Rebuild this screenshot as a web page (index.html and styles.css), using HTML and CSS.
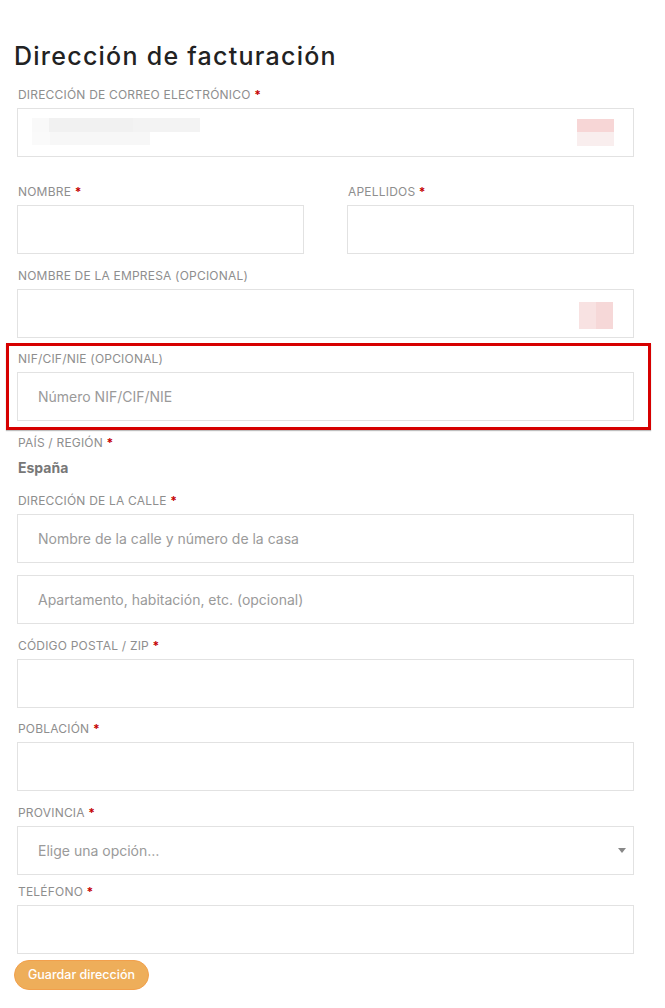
FILE: index.html
```html
<!DOCTYPE html>
<html lang="es">

<head>
    <meta charset="UTF-8">
    <meta name="viewport" content="width=device-width, initial-scale=1.0">
    <title>Dirección de facturación</title>
    <link rel="stylesheet" href="styles.css">
</head>

<body>
    <div class="billing">
        <h3 class="title">Dirección de facturación</h3>

        <div class="field field-email">
            <label class="lbl">Dirección de correo electrónico <abbr class="req">*</abbr></label>
            <div class="box">
                <div class="blur-text">
                    <span class="bt1"></span>
                    <span class="bt2"></span>
                </div>
                <div class="blur-icon"></div>
            </div>
        </div>

        <div class="row">
            <div class="field">
                <label class="lbl">Nombre <abbr class="req">*</abbr></label>
                <div class="box"></div>
            </div>
            <div class="field">
                <label class="lbl">Apellidos <abbr class="req">*</abbr></label>
                <div class="box"></div>
            </div>
        </div>

        <div class="field">
            <label class="lbl">Nombre de la empresa (opcional)</label>
            <div class="box">
                <div class="blur-icon small"></div>
            </div>
        </div>

        <div class="field marked">
            <label class="lbl">NIF/CIF/NIE (opcional)</label>
            <div class="box"><span class="ph">Número NIF/CIF/NIE</span></div>
            <div class="mark"></div>
        </div>

        <div class="field">
            <label class="lbl">País / Región <abbr class="req">*</abbr></label>
            <strong class="country">España</strong>
        </div>

        <div class="field">
            <label class="lbl">Dirección de la calle <abbr class="req">*</abbr></label>
            <div class="box"><span class="ph">Nombre de la calle y número de la casa</span></div>
            <div class="box second"><span class="ph">Apartamento, habitación, etc. (opcional)</span></div>
        </div>

        <div class="field">
            <label class="lbl">Código postal / ZIP <abbr class="req">*</abbr></label>
            <div class="box"></div>
        </div>

        <div class="field">
            <label class="lbl">Población <abbr class="req">*</abbr></label>
            <div class="box"></div>
        </div>

        <div class="field field-tight">
            <label class="lbl">Provincia <abbr class="req">*</abbr></label>
            <div class="box select">
                <span class="ph">Elige una opción…</span>
                <span class="arrow"></span>
            </div>
        </div>

        <div class="field field-last">
            <label class="lbl">Teléfono <abbr class="req">*</abbr></label>
            <div class="box"></div>
        </div>

        <button class="save">Guardar dirección</button>
    </div>
</body>

</html>
```

FILE: styles.css
```css
* {
    margin: 0;
    padding: 0;
    box-sizing: border-box;
}

body {
    background: #ffffff;
    font-family: 'Inter', 'Open Sans', sans-serif;
    color: #333333;
}

.billing {
    width: 651px;
    padding: 41px 17px 0 17px;
}

.title {
    font-size: 25px;
    font-weight: 500;
    letter-spacing: 1.25px;
    line-height: 30px;
    color: #222222;
    margin-left: -3px;
    margin-bottom: 13px;
}

.field {
    position: relative;
    margin-bottom: 10.5px;
}

.field-email {
    margin-bottom: 24px;
}

.field-tight {
    margin-bottom: 6px;
}

.field-last {
    margin-bottom: 6px;
}

.lbl {
    display: block;
    font-size: 12px;
    font-weight: 400;
    letter-spacing: 0.2px;
    line-height: 18px;
    padding-top: 2px;
    margin-bottom: 4px;
    color: #8e8e8e;
    text-transform: uppercase;
    padding-left: 1px;
}

.req {
    color: #c40000;
    font-weight: 700;
    text-decoration: none;
}

.box {
    position: relative;
    height: 49px;
    border: 1px solid #e2e2e2;
    background: #ffffff;
    display: flex;
    align-items: center;
    padding-left: 20px;
}

.box.second {
    margin-top: 12px;
}

.ph {
    font-size: 14px;
    color: #9a9a9a;
}

.row {
    display: grid;
    grid-template-columns: 287px 287px;
    column-gap: 43px;
}

.country {
    display: block;
    font-size: 14px;
    line-height: 24px;
    font-weight: 700;
    color: #777777;
    padding-left: 1px;
}

/* redacted autofill bits */
.blur-text {
    position: absolute;
    left: 14px;
    top: 9px;
    width: 168px;
    height: 28px;
}

.blur-text span {
    position: absolute;
    display: block;
}

.bt1 {
    left: 0;
    top: 0;
    width: 168px;
    height: 14px;
    background: linear-gradient(90deg, #f9f9f9 0 10%, #f1f1f1 10% 60%, #f3f3f3 60% 100%);
}

.bt2 {
    left: 0;
    top: 14px;
    width: 118px;
    height: 13px;
    background: linear-gradient(90deg, #fafafa 0 15%, #f7f7f7 15% 100%);
}

.blur-icon {
    position: absolute;
    right: 19px;
    top: 10px;
    width: 37px;
    height: 27px;
    background: linear-gradient(180deg, #f7d6d6 0 50%, #f9eeee 50% 100%);
}

.blur-icon.small {
    right: 20px;
    top: 12px;
    width: 34px;
    background: linear-gradient(90deg, #f8e2e2 0 50%, #f6d8d8 50% 100%);
}

.select .arrow {
    position: absolute;
    right: 7px;
    top: 21px;
    width: 0;
    height: 0;
    border-left: 4px solid transparent;
    border-right: 4px solid transparent;
    border-top: 5px solid #888888;
}

.mark {
    position: absolute;
    left: -11px;
    right: -17px;
    top: -5px;
    bottom: -9px;
    border: 3px solid #d60000;
    box-shadow: 0 1px 1px rgba(0, 0, 0, 0.25);
    pointer-events: none;
}

.save {
    margin-left: -3px;
    background: #eeae5a;
    color: #ffffff;
    border: 1px solid #f2a04c;
    border-radius: 16px;
    padding: 0 13px;
    height: 30px;
    font-family: 'Inter', sans-serif;
    font-size: 12.5px;
    font-weight: 500;
    cursor: pointer;
}
```
